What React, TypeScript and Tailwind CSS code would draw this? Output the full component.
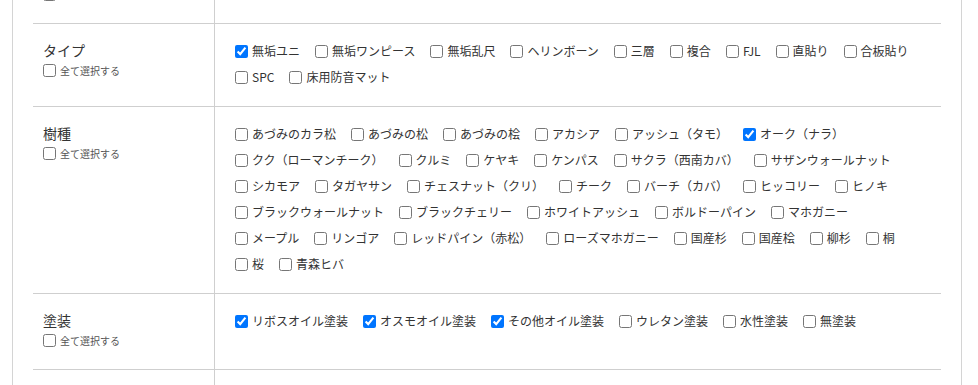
import { useState } from 'react';

type Group = {
  label: string;
  items: { name: string; checked?: boolean }[];
};

const groups: Group[] = [
  {
    label: '色味',
    items: [
      { name: 'ナチュラル' },
      { name: 'ミディアム' },
      { name: 'ダーク' },
      { name: 'ホワイト' },
    ],
  },
  {
    label: 'タイプ',
    items: [
      { name: '無垢ユニ', checked: true },
      { name: '無垢ワンピース' },
      { name: '無垢乱尺' },
      { name: 'ヘリンボーン' },
      { name: '三層' },
      { name: '複合' },
      { name: 'FJL' },
      { name: '直貼り' },
      { name: '合板貼り' },
      { name: 'SPC' },
      { name: '床用防音マット' },
    ],
  },
  {
    label: '樹種',
    items: [
      { name: 'あづみのカラ松' },
      { name: 'あづみの松' },
      { name: 'あづみの桧' },
      { name: 'アカシア' },
      { name: 'アッシュ（タモ）' },
      { name: 'オーク（ナラ）', checked: true },
      { name: 'クク（ローマンチーク）' },
      { name: 'クルミ' },
      { name: 'ケヤキ' },
      { name: 'ケンパス' },
      { name: 'サクラ（西南カバ）' },
      { name: 'サザンウォールナット' },
      { name: 'シカモア' },
      { name: 'タガヤサン' },
      { name: 'チェスナット（クリ）' },
      { name: 'チーク' },
      { name: 'バーチ（カバ）' },
      { name: 'ヒッコリー' },
      { name: 'ヒノキ' },
      { name: 'ブラックウォールナット' },
      { name: 'ブラックチェリー' },
      { name: 'ホワイトアッシュ' },
      { name: 'ボルドーパイン' },
      { name: 'マホガニー' },
      { name: 'メープル' },
      { name: 'リンゴア' },
      { name: 'レッドパイン（赤松）' },
      { name: 'ローズマホガニー' },
      { name: '国産杉' },
      { name: '国産桧' },
      { name: '柳杉' },
      { name: '桐' },
      { name: '桜' },
      { name: '青森ヒバ' },
    ],
  },
  {
    label: '塗装',
    items: [
      { name: 'リボスオイル塗装', checked: true },
      { name: 'オスモオイル塗装', checked: true },
      { name: 'その他オイル塗装', checked: true },
      { name: 'ウレタン塗装' },
      { name: '水性塗装' },
      { name: '無塗装' },
    ],
  },
  {
    label: 'サイズ',
    items: [{ name: '幅90mm' }, { name: '幅120mm' }, { name: '幅150mm' }],
  },
];

export default function App() {
  return (
    <div
      className="h-[385px] w-[978px] overflow-hidden bg-white text-[#333]"
      style={{ fontFamily: '"Noto Sans CJK JP", "Noto Sans", sans-serif' }}
    >
      <div className="-mt-[52px] ml-[12px] w-[950px] border-x border-[#d4d4d4] px-[20px]">
        {groups.map((g) => (
          <FilterRow key={g.label} group={g} />
        ))}
      </div>
    </div>
  );
}

function FilterRow({ group }: { group: Group }) {
  const [checked, setChecked] = useState<Record<string, boolean>>(() =>
    Object.fromEntries(group.items.map((i) => [i.name, !!i.checked])),
  );

  return (
    <div className="flex border-b border-[#cfcfcf]">
      <div className="w-[182px] shrink-0 border-r border-[#cfcfcf] pl-[10px] pt-[15px] pb-[20px]">
        <div className="text-[14px] leading-[22px]">{group.label}</div>
        <label className="flex h-[18px] items-center gap-[4px] text-[10px] text-[#555]">
          <input type="checkbox" className="m-0 h-[13px] w-[13px]" />
          全て選択する
        </label>
      </div>
      <div className="flex flex-1 flex-wrap content-start gap-x-[15px] pl-[20px] pr-[20px] pt-[14px] pb-[16px]">
        {group.items.map((item) => (
          <label
            key={item.name}
            className="flex h-[26px] items-center gap-[4px] whitespace-nowrap text-[12px]"
          >
            <input
              type="checkbox"
              className="m-0 h-[13px] w-[13px]"
              checked={checked[item.name]}
              onChange={(e) =>
                setChecked((c) => ({ ...c, [item.name]: e.target.checked }))
              }
            />
            {item.name}
          </label>
        ))}
      </div>
    </div>
  );
}
